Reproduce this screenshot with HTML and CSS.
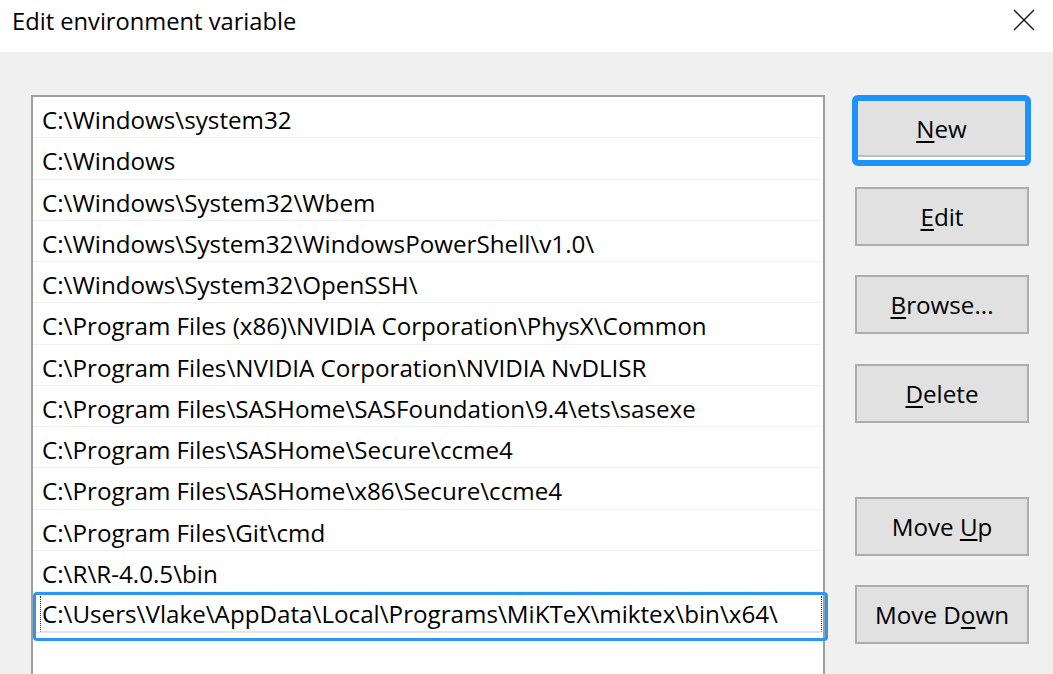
FILE: index.html
```html
<!DOCTYPE html>
<html>
<head>
<meta charset="utf-8">
<title>Edit environment variable</title>
<link rel="stylesheet" href="styles.css">
</head>
<body>
<div class="window">
  <div class="titlebar">
    <span class="title">Edit environment variable</span>
    <span class="close">
      <svg width="22" height="22" viewBox="0 0 22 22"><path d="M1 1 L21 21 M21 1 L1 21" stroke="#1a1a1a" stroke-width="1.4" fill="none"/></svg>
    </span>
  </div>
  <div class="content">
    <div class="list">
      <div class="row">C:\Windows\system32</div>
      <div class="row">C:\Windows</div>
      <div class="row">C:\Windows\System32\Wbem</div>
      <div class="row">C:\Windows\System32\WindowsPowerShell\v1.0\</div>
      <div class="row">C:\Windows\System32\OpenSSH\</div>
      <div class="row">C:\Program Files (x86)\NVIDIA Corporation\PhysX\Common</div>
      <div class="row">C:\Program Files\NVIDIA Corporation\NVIDIA NvDLISR</div>
      <div class="row">C:\Program Files\SASHome\SASFoundation\9.4\ets\sasexe</div>
      <div class="row">C:\Program Files\SASHome\Secure\ccme4</div>
      <div class="row">C:\Program Files\SASHome\x86\Secure\ccme4</div>
      <div class="row">C:\Program Files\Git\cmd</div>
      <div class="row">C:\R\R-4.0.5\bin</div>
      <div class="row row-edit">
        <div class="editbox">
          <div class="focusrect"></div>
          <span class="edittext">C:\Users\Vlake\AppData\Local\Programs\MiKTeX\miktex\bin\x64\</span>
        </div>
      </div>
      <div class="row"></div>
    </div>
    <div class="buttons">
      <div class="btn btn-default"><span class="btn-inner"><span><u>N</u>ew</span></span></div>
      <div class="btn btn-edit"><span><u>E</u>dit</span></div>
      <div class="btn btn-browse"><span><u>B</u>rowse...</span></div>
      <div class="btn btn-delete"><span><u>D</u>elete</span></div>
      <div class="btn btn-up"><span>Move <u>U</u>p</span></div>
      <div class="btn btn-down"><span>Move D<u>o</u>wn</span></div>
    </div>
  </div>
</div>
</body>
</html>
```
FILE: styles.css
```css
html, body {
  margin: 0;
  padding: 0;
}
body {
  width: 1053px;
  height: 674px;
  overflow: hidden;
  background: #f0f0f0;
  font-family: "Open Sans", "Noto Sans", sans-serif;
  font-size: 24.2px;
  color: #000;
}
.window {
  display: flex;
  flex-direction: column;
  height: 674px;
}
.titlebar {
  height: 52px;
  background: #fff;
  display: flex;
  align-items: flex-start;
  justify-content: space-between;
  flex-shrink: 0;
}
.title {
  margin-left: 12px;
  margin-top: 5px;
  font-size: 23.7px;
  color: #000;
}
.close {
  margin-top: 9px;
  margin-right: 18px;
  width: 22px;
  height: 22px;
  display: block;
}
.close svg {
  display: block;
}
.content {
  flex: 1;
  display: flex;
  align-items: flex-start;
  padding-top: 43px;
  padding-left: 31px;
}
.list {
  width: 790px;
  height: 600px;
  background: #fff;
  border: 2px solid #9e9e9e;
  flex-shrink: 0;
}
.row {
  position: relative;
  box-sizing: border-box;
  height: 41.25px;
  line-height: 41.25px;
  padding-left: 9px;
  padding-top: 2px;
  border-bottom: 1px solid #f0f0f0;
  white-space: nowrap;
  margin-right: 2px;
}
.row-edit {
  border-bottom-color: #e4e4e4;
}
.editbox {
  position: absolute;
  left: 0;
  top: 0;
  width: 795px;
  height: 48.5px;
  box-sizing: border-box;
  border: 3px solid #2b95f4;
  border-radius: 4px;
}
.focusrect {
  position: absolute;
  left: 4px;
  right: 3px;
  top: 1px;
  bottom: 6px;
  border-left: 1px dotted #333;
  border-right: 1px dotted #333;
  border-bottom: 1px solid #e4e4e4;
}
.edittext {
  position: absolute;
  left: 6px;
  top: -2px;
  line-height: 41.25px;
}
.buttons {
  display: flex;
  flex-direction: column;
  margin-left: 30px;
  width: 174px;
}
.btn {
  box-sizing: border-box;
  height: 59px;
  width: 174px;
  border: 2px solid #adadad;
  background: #e1e1e1;
  display: flex;
  align-items: center;
  justify-content: center;
  white-space: nowrap;
}
.btn u {
  text-decoration-thickness: 1.5px;
  text-underline-offset: 3px;
}
.btn-default {
  width: 179px;
  height: 71px;
  margin-left: -3px;
  border: 6px solid #1e92fb;
  border-radius: 6px;
  background: #fff;
  padding: 0 0 1px 0;
  align-items: stretch;
}
.btn-inner {
  flex: 1;
  display: flex;
  align-items: center;
  justify-content: center;
  background: #e1e1e1;
  border-bottom: 2px solid #bdbdbd;
  margin-bottom: 2px;
}
.btn-edit { margin-top: 21px; }
.btn-browse { margin-top: 29px; }
.btn-delete { margin-top: 30px; }
.btn-up { margin-top: 74px; }
.btn-down { margin-top: 29px; }
```
